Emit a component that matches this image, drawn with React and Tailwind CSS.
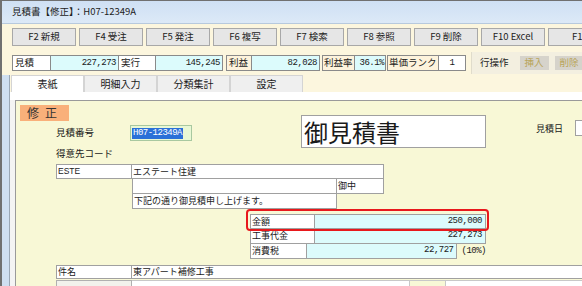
export default function App() {
    const buttons = ['F2 新規', 'F4 受注', 'F5 発注', 'F6 複写', 'F7 検索', 'F8 参照', 'F9 削除', 'F10 Excel', 'F11'];
    const tabs = ['表紙', '明細入力', '分類集計', '設定'];
    const mono = "font-['Liberation_Mono',monospace] text-[9px] tracking-[-0.5px]";

    return (
        <div className="w-[582px] h-[286px] overflow-hidden bg-[#fcf6de] border-t border-l-2 border-[#707070] text-[9.5px] text-[#1a1a1a] font-['Noto_Sans_CJK_JP','Noto_Sans',sans-serif] leading-none whitespace-nowrap">
            {/* Title bar */}
            <div className="h-[23px] bg-gradient-to-b from-[#cfe0f4] to-[#dce9f7] flex items-center pl-[10px] text-[9.5px] text-[#222] border-b border-[#b7c9dd]">
                見積書【修正】：H07-12349A
            </div>

            {/* Function keys */}
            <div className="flex pl-[10px] pt-[4px] gap-[3px]">
                {buttons.map((b) => (
                    <div
                        key={b}
                        className="w-[64px] h-[18px] shrink-0 bg-[#e6e6e6] border border-[#a8a8a8] flex items-center justify-center text-[9.5px] text-[#222]"
                    >
                        {b}
                    </div>
                ))}
            </div>

            {/* Totals row */}
            <div className="flex items-start pl-[10px] mt-[6px] h-[22px]">
                <div className="flex mt-[3px]">
                    <div className="w-[39px] h-[16px] bg-white border border-[#8a8a8a] flex items-center pl-[2px]">見積</div>
                    <div className={`w-[67px] h-[16px] bg-[#dcfbfc] border-y border-[#8a8a8a] flex items-center justify-end pr-[2px] ${mono}`}>227,273</div>
                    <div className="w-[38px] h-[16px] bg-white border border-[#8a8a8a] flex items-center pl-[2px]">実行</div>
                    <div className={`w-[67px] h-[16px] bg-[#dcfbfc] border border-l-0 border-[#8a8a8a] flex items-center justify-end pr-[2px] ${mono}`}>145,245</div>
                    <div className="w-[26px] h-[16px] ml-[3px] bg-[#fdf3dc] border border-[#8a8a8a] flex items-center pl-[2px]">利益</div>
                    <div className={`w-[68px] h-[16px] bg-[#dcfbfc] border border-l-0 border-[#8a8a8a] flex items-center justify-end pr-[2px] ${mono}`}>82,028</div>
                    <div className="w-[33px] h-[16px] ml-[2px] bg-[#fdf3dc] border border-[#8a8a8a] flex items-center pl-[1px]">利益率</div>
                    <div className={`w-[31px] h-[16px] bg-[#dcfbfc] border border-l-0 border-[#8a8a8a] flex items-center justify-end pr-[1px] ${mono}`}>36.1%</div>
                    <div className="w-[52px] h-[16px] ml-[1px] bg-[#fdf3dc] border border-[#8a8a8a] flex items-center pl-[1px]">単価ランク</div>
                    <div className={`w-[27px] h-[16px] bg-white border border-l-0 border-[#8a8a8a] flex items-center justify-center ${mono}`}>1</div>
                </div>
                <div className="ml-[5px] flex-1 h-[22px] bg-[#f3efe0] border-l border-[#e0dccb] flex items-center pl-[8px]">
                    <span className="text-[#222]">行操作</span>
                    <div className="ml-[11px] w-[29px] h-[14px] bg-[#d6d3cb] text-[#b9a55a] flex items-center justify-center">挿入</div>
                    <div className="ml-[6px] w-[29px] h-[14px] bg-[#d6d3cb] text-[#b9a55a] flex items-center justify-center">削除</div>
                </div>
            </div>

            {/* Tabs + content */}
            <div className="flex mt-[1px]">
                <div className="w-[8px] shrink-0 bg-[#cfdff1] border-r border-[#9aa7b5]" />
                <div className="flex-1 flex flex-col">
                    <div className="flex pl-[1px] h-[17px]">
                        {tabs.map((t, i) => (
                            <div
                                key={t}
                                className={`w-[73px] h-[17px] flex items-center justify-center border border-b-0 border-[#d4d4d4] text-[10px] ${i === 0 ? 'bg-white' : 'bg-[#efefef]'}`}
                            >
                                {t}
                            </div>
                        ))}
                    </div>
                    <div className="h-[8px] bg-white" />
                    <div className="flex">
                        <div className="w-[6px] shrink-0 bg-[#f4f4f4] border-r border-[#9a9a9a]" />
                        <div className="flex-1 h-[190px] bg-[#f8f8d6] border-t border-[#9a9a9a] flex flex-col">
                            {/* Header area */}
                            <div className="flex items-start h-[47px]">
                                <div className="w-[285px] shrink-0">
                                    <div className="ml-[4px] mt-[4px] w-[49px] h-[16px] bg-[#f9b07a] flex items-center pl-[7px] text-[12px] text-[#333] tracking-[6px]">
                                        修正
                                    </div>
                                    <div className="flex items-center mt-[4px] h-[16px]">
                                        <span className="ml-[40px] w-[74px]">見積番号</span>
                                        <div className="w-[62px] h-[16px] bg-[#e9f8d4] border border-[#a8c8a0] flex items-center pl-[1px]">
                                            <span className={`bg-[#2a70d8] text-white px-[1px] py-[1px] ${mono}`}>H07-12349A</span>
                                        </div>
                                    </div>
                                </div>
                                <div className="mt-[14px] w-[185px] h-[33px] bg-white border border-[#a0a0a0] flex items-center pl-[2px] text-[24px]">
                                    御見積書
                                </div>
                                <div className="ml-[50px] mt-[19px] flex items-center">
                                    <span className="text-[9px]">見積日</span>
                                    <div className="ml-[12px] w-[20px] h-[16px] bg-white border border-[#a0a0a0]" />
                                </div>
                            </div>

                            <div className="ml-[40px] mt-[1px]">得意先コード</div>

                            {/* Customer table */}
                            <div className="ml-[40px] mt-[5px] flex flex-col text-[9px]">
                                <div className="flex h-[15px]">
                                    <div className="w-[76px] bg-white border border-[#a0a0a0] flex items-center pl-[1px] font-['Liberation_Sans',sans-serif] text-[8.5px]">ESTE</div>
                                    <div className="w-[252px] bg-white border border-l-0 border-[#a0a0a0] flex items-center pl-[1px]">エステート住建</div>
                                </div>
                                <div className="flex h-[15px] ml-[76px]">
                                    <div className="w-[205px] bg-white border border-t-0 border-[#a0a0a0]" />
                                    <div className="w-[47px] bg-white border border-l-0 border-t-0 border-[#a0a0a0] flex items-center pl-[1px]">御中</div>
                                </div>
                                <div className="flex h-[15px] ml-[76px]">
                                    <div className="w-[205px] bg-white border border-t-0 border-[#a0a0a0] flex items-center pl-[1px]">下記の通り御見積申し上げます。</div>
                                </div>
                            </div>

                            {/* Amounts */}
                            <div className="relative ml-[234px] mt-[5px] w-[236px] flex flex-col text-[9px]">
                                {[
                                    ['金額', '250,000'],
                                    ['工事代金', '227,273'],
                                    ['消費税', '22,727'],
                                ].map(([l, v], i) => (
                                    <div key={l} className="flex h-[15px]">
                                        <div className={`w-[65px] bg-white border border-[#a0a0a0] flex items-center pl-[1px] ${i > 0 ? 'border-t-0' : ''}`}>{l}</div>
                                        <div className={`w-[171px] bg-[#dcfbfc] border border-l-0 border-[#a0a0a0] flex items-center justify-end pr-[3px] ${mono} ${i > 0 ? 'border-t-0' : ''}`}>{v}</div>
                                        {i === 2 && <span className={`ml-[4px] self-center ${mono}`}>(10%)</span>}
                                    </div>
                                ))}
                                <div className="absolute left-[-4px] top-[-5px] w-[243px] h-[22px] border-2 border-[#e8181c] rounded-[4px]" />
                            </div>

                            {/* Subject */}
                            <div className="mt-[6px] flex h-[15px] text-[9px]">
                                <div className="ml-[40px] w-[76px] bg-white border border-[#a0a0a0] flex items-center pl-[1px]">件名</div>
                                <div className="flex-1 bg-white border-y border-[#a0a0a0] flex items-center pl-[1px]">東アパート補修工事</div>
                            </div>
                            <div className="mt-[1px] flex h-[10px]">
                                <div className="ml-[40px] w-[76px] bg-[#f2f2ec] border border-[#b0b0b0]" />
                                <div className="flex-1 bg-white border-y border-[#c8c8c8] flex">
                                    <div className="ml-[277px] w-[37px] bg-[#f8f8d6] border-x border-[#c8c8c8]" />
                                </div>
                            </div>
                        </div>
                    </div>
                </div>
            </div>
        </div>
    );
}
